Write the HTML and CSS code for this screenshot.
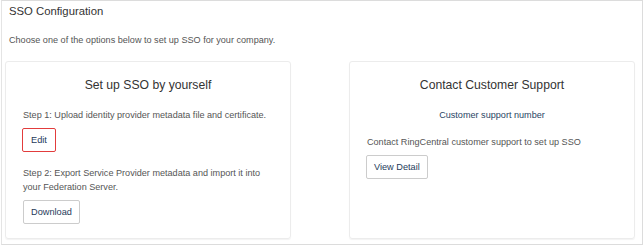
FILE: index.html
```html
<!DOCTYPE html>
<html>
<head>
<meta charset="utf-8">
<link rel="stylesheet" href="styles.css">
</head>
<body>
<div class="frame">
  <div class="page-title">SSO Configuration</div>
  <p class="intro">Choose one of the options below to set up SSO for your company.</p>
  <div class="cards">
    <div class="card card-left">
      <div class="card-title">Set up SSO by yourself</div>
      <p class="step step1">Step 1: Upload identity provider metadata file and certificate.</p>
      <button class="btn btn-focus">Edit</button>
      <p class="step step2">Step 2: Export Service Provider metadata and import it into your Federation Server.</p>
      <button class="btn btn-download">Download</button>
    </div>
    <div class="card card-right">
      <div class="card-title">Contact Customer Support</div>
      <div class="support-link">Customer support number</div>
      <p class="step step3">Contact RingCentral customer support to set up SSO</p>
      <button class="btn btn-view">View Detail</button>
    </div>
  </div>
</div>
</body>
</html>
```

FILE: styles.css
```css
html, body {
  margin: 0;
  padding: 0;
  background: #fff;
}
body {
  font-family: "Liberation Sans", Arial, sans-serif;
  color: #555;
}
.frame {
  box-sizing: border-box;
  width: 642px;
  height: 245px;
  margin-left: 1px;
  border: 1px solid #dcdcdc;
  border-left-color: #e4e4e4;
}
.page-title {
  font-size: 11.3px;
  color: #333;
  padding: 3px 0 0 7px;
  line-height: 14px;
}
.intro {
  margin: 16px 0 0 7px;
  font-size: 9.1px;
  line-height: 12px;
  color: #555;
}
.cards {
  display: flex;
  gap: 58px;
  padding-left: 3px;
  margin-top: 15px;
}
.card {
  box-sizing: border-box;
  width: 286px;
  height: 178px;
  border: 1px solid #ececec;
  border-radius: 3px;
  box-shadow: 0 1px 1px rgba(0,0,0,0.05);
  padding: 0 17px;
}
.card-title {
  text-align: center;
  font-size: 12.2px;
  line-height: 16px;
  color: #333;
  margin-top: 15px;
}
.step {
  margin: 0;
  font-size: 9.1px;
  line-height: 14px;
}
.step1 {
  margin-top: 15px;
}
.btn {
  display: block;
  font-family: "Liberation Sans", Arial, sans-serif;
  font-size: 9.2px;
  color: #1e3a5a;
  background: #fff;
  border: 1px solid #ccc;
  border-radius: 2px;
  height: 24px;
  padding: 0 7px;
}
.btn-focus {
  border-color: #e23c3c;
  margin-top: 6px;
  margin-left: -1px;
  padding: 0 8px;
}
.step2 {
  margin-top: 14px;
}
.btn-download {
  margin-top: 6px;
}
.support-link {
  text-align: center;
  color: #2a4563;
  font-size: 9.1px;
  line-height: 14px;
  margin-top: 15px;
}
.step3 {
  margin-top: 13px;
}
.btn-view {
  margin-top: 6px;
  margin-left: -1px;
}
```
